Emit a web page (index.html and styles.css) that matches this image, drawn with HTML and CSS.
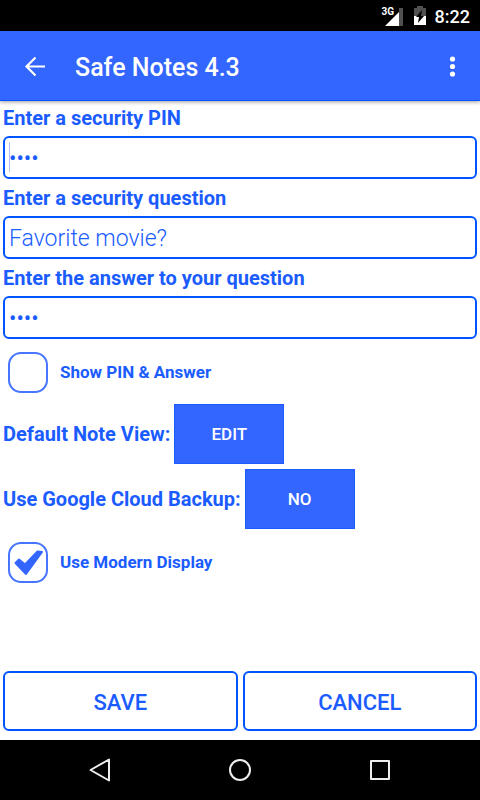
FILE: index.html
```html
<!DOCTYPE html>
<html lang="en">
<head>
<meta charset="utf-8">
<meta name="viewport" content="width=device-width, initial-scale=1">
<title>Safe Notes 4.3</title>
<link rel="stylesheet" href="styles.css">
</head>
<body>
<div class="status-bar">
  <svg class="signal" width="24" height="20" viewBox="0 0 24 20" aria-hidden="true">
    <path fill="#505050" d="M18 1h4v18h-4z"/>
    <path fill="#fff" d="M4 19L18 5v14z"/>
  </svg>
  <span class="network">3G</span>
  <svg class="battery" width="12" height="19" viewBox="0 0 12 19" aria-hidden="true">
    <path fill="#505050" d="M3 0h6v2h3v8H0V2h3z"/>
    <path fill="#fff" d="M0 10h12v9H0z"/>
    <path fill="#000" d="M8 4L2 11h3l-1 6 6-7H7z"/>
  </svg>
  <span class="clock">8:22</span>
</div>
<header class="app-bar">
  <button class="icon-button" type="button" aria-label="Back">
    <svg width="24" height="24" viewBox="0 0 24 24" fill="none" stroke="#fff" stroke-width="2.2"><path d="M22 12.500H4M12.500 3.500L3.500 12.500l9 9"/></svg>
  </button>
  <h1>Safe Notes 4.3</h1>
  <button class="icon-button" type="button" aria-label="More options">
    <svg width="24" height="24" viewBox="0 0 24 24" fill="#fff"><circle cx="12.500" cy="5" r="2.600"/><circle cx="12.500" cy="12.500" r="2.600"/><circle cx="12.500" cy="20" r="2.600"/></svg>
  </button>
</header>
<form class="settings">
  <div class="field">
    <label for="pin">Enter a security PIN</label>
    <div class="input-wrap"><input id="pin" type="password" value="1234"><span class="caret"></span></div>
  </div>
  <div class="field">
    <label for="question">Enter a security question</label>
    <input id="question" type="text" value="Favorite movie?">
  </div>
  <div class="field">
    <label for="answer">Enter the answer to your question</label>
    <input id="answer" type="password" value="Jaws">
  </div>
  <label class="check-row"><input type="checkbox"><span>Show PIN &amp; Answer</span></label>
  <div class="option-row"><label for="view">Default Note View:</label><button id="view" class="toggle" type="button">EDIT</button></div>
  <div class="option-row"><label for="backup">Use Google Cloud Backup:</label><button id="backup" class="toggle" type="button">NO</button></div>
  <label class="check-row"><span class="box"><input type="checkbox" checked><svg class="tick" width="40" height="41" viewBox="0 0 40 41" aria-hidden="true"><path fill="#3366ff" stroke="#3366ff" stroke-width="2" stroke-linejoin="round" d="M7.500 21l3.500-3.500 6 5L29.500 9.500l4.500.5L18 32z"/></svg></span><span>Use Modern Display</span></label>
  <div class="actions">
    <button type="button">SAVE</button>
    <button type="button">CANCEL</button>
  </div>
</form>
<nav class="nav-bar">
  <button type="button" aria-label="Back"><svg width="24" height="24" viewBox="0 0 24 24"><path d="M21 1.500v21L2.500 12z"/></svg></button>
  <button type="button" aria-label="Home"><svg width="24" height="24" viewBox="0 0 24 24"><circle cx="12" cy="12" r="10"/></svg></button>
  <button type="button" aria-label="Recent apps"><svg width="24" height="24" viewBox="0 0 24 24"><rect x="3" y="3" width="18" height="18"/></svg></button>
</nav>
</body>
</html>
```
FILE: styles.css
```css
* { box-sizing: border-box; }

body {
  margin: 0;
  min-height: 100vh;
  display: flex;
  flex-direction: column;
  background: #fff;
  color: #1a5cff;
  font-family: Roboto, "Liberation Sans", sans-serif;
}

button {
  margin: 0;
  padding: 0;
  border: 0;
  background: none;
  font-family: inherit;
}

svg { display: block; }

.status-bar {
  position: relative;
  display: flex;
  justify-content: flex-end;
  align-items: center;
  height: 31px;
  padding: 2px 10px 0;
  background: #000;
  color: #fff;
}

.signal { margin-right: 9px; }
.battery { margin: 0 9px 2px 0; }

.network {
  position: absolute;
  right: 86px;
  top: 5px;
  font-size: 10px;
  line-height: 13px;
  font-weight: 700;
}

.clock {
  font-size: 18px;
  font-weight: 500;
}

.app-bar {
  display: flex;
  align-items: center;
  height: 70px;
  padding: 0 16px 0 23px;
  background: #3366ff;
  border-bottom: 1px solid #0055ff;
  box-shadow: 0 1px 4px rgba(0, 0, 0, 0.4);
  color: #fff;
}

.app-bar h1 {
  flex: 1;
  margin: 0 0 0 28px;
  padding-top: 4px;
  font-size: 25px;
  font-weight: 500;
}

.settings {
  flex: 1;
  display: flex;
  flex-direction: column;
  padding: 0 3px 9px;
}

.field + .field { margin-top: 2px; }

.field label,
.option-row label {
  font-size: 20px;
  font-weight: 700;
}

.field label {
  display: block;
  line-height: 35px;
}

.field input {
  display: block;
  width: 100%;
  height: 43px;
  padding: 2px 4px 0;
  border: 2px solid #0055ff;
  border-radius: 6px;
  background: #fff;
  color: #1a5cff;
  font-family: inherit;
  font-size: 23px;
  font-weight: 300;
  outline: 0;
}

.field input[type="password"] {
  font-size: 22px;
  font-weight: 400;
}

.input-wrap { position: relative; }

.caret {
  position: absolute;
  left: 6px;
  top: 6px;
  bottom: 7px;
  width: 1px;
  background: #aebfff;
}

.check-row {
  display: flex;
  align-items: center;
  gap: 12px;
  height: 64px;
  margin-top: 1px;
  padding-left: 5px;
  font-size: 17px;
  font-weight: 700;
}

.check-row input {
  appearance: none;
  display: block;
  width: 40px;
  height: 41px;
  margin: 0;
  border: 2px solid #4775ff;
  border-radius: 13px;
}

.box { position: relative; }

.tick {
  position: absolute;
  left: 0;
  top: 0;
}

.option-row {
  display: flex;
  align-items: center;
  gap: 4px;
}

.option-row + .option-row { margin-top: 5px; }

.toggle {
  width: 110px;
  height: 60px;
  border: 1px solid #1a5cff;
  background: #3366ff;
  color: #fff;
  font-size: 17px;
  font-weight: 500;
}

.actions {
  display: grid;
  grid-template-columns: 1fr 1fr;
  gap: 5px;
  margin-top: auto;
}

.actions button {
  height: 60px;
  padding-top: 2px;
  border: 2px solid #0055ff;
  border-radius: 6px;
  color: #1a5cff;
  font-size: 22px;
  font-weight: 500;
}

.nav-bar {
  display: flex;
  justify-content: center;
  align-items: center;
  gap: 116px;
  height: 60px;
  background: #000;
}

.nav-bar svg {
  fill: none;
  stroke: #eee;
  stroke-width: 2;
  stroke-linejoin: round;
}
```
